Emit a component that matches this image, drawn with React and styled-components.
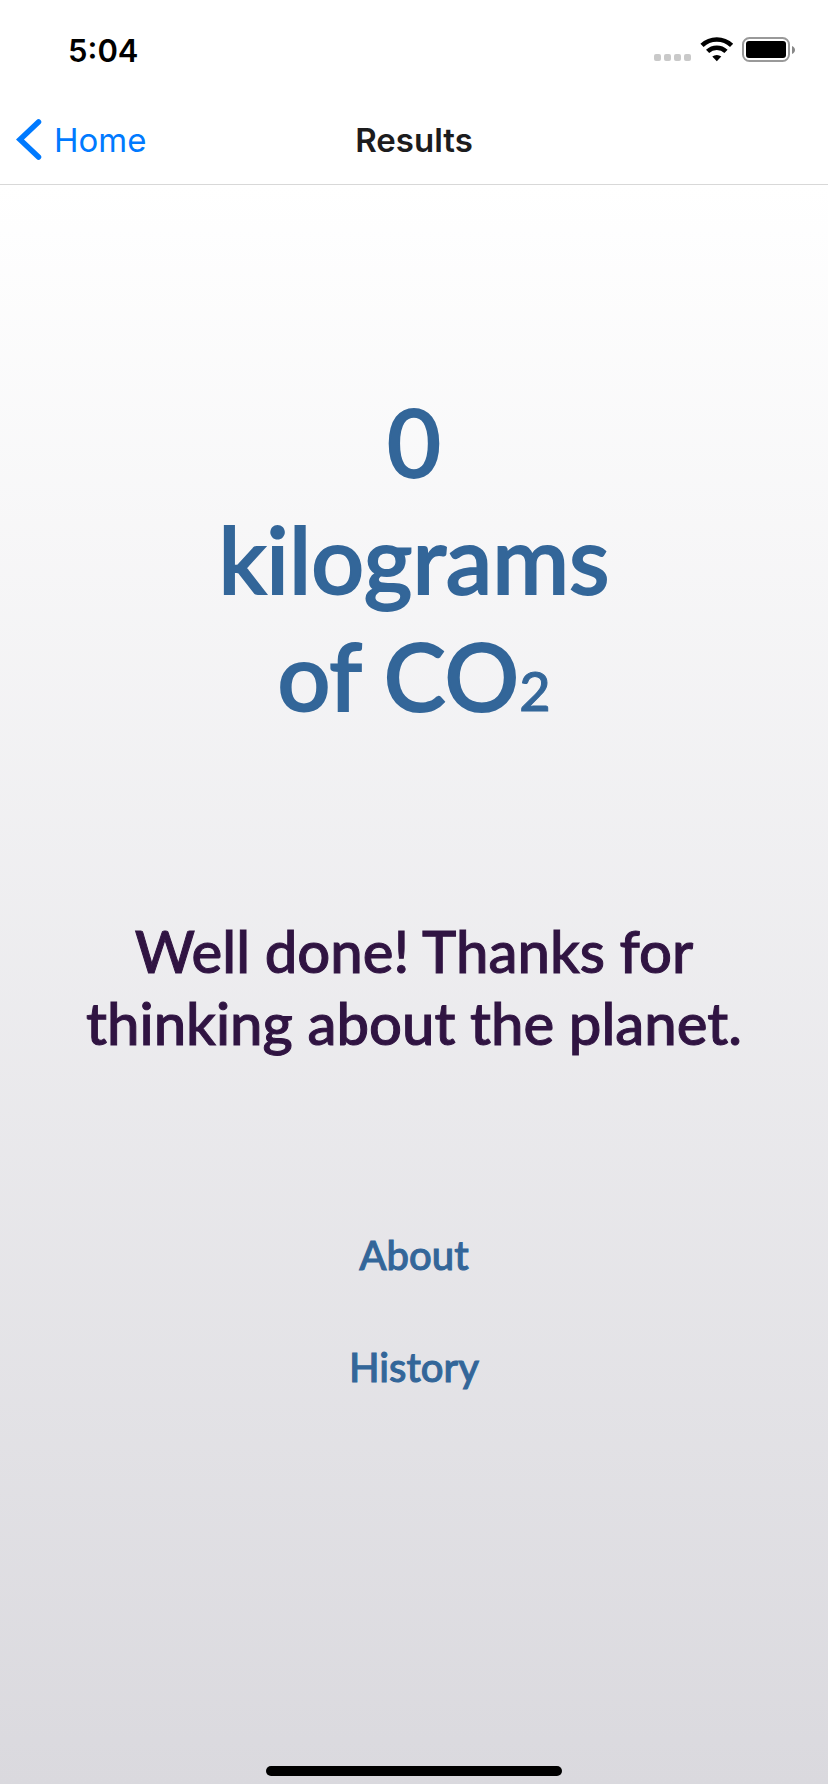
import React from "react";
import styled, { createGlobalStyle } from "styled-components";

const GlobalStyle = createGlobalStyle`
  * { box-sizing: border-box; }
  body { margin: 0; background: #fff; font-family: Inter, "Liberation Sans", sans-serif; }
`;

const Screen = styled.div`
  min-height: 100vh;
  padding-bottom: 8px;
  display: flex;
  flex-direction: column;
`;

const StatusBar = styled.header`
  height: 96px;
  padding: 6px 32px 0 68px;
  display: flex;
  align-items: center;
  justify-content: space-between;
`;

const Clock = styled.time`
  font-size: 31px;
  line-height: 40px;
  font-weight: 600;
  color: #000;
`;

const StatusIcons = styled.svg`
  width: 142px;
  height: 28px;
  display: block;
`;

const NavBar = styled.nav`
  height: 89px;
  padding: 0 16px;
  display: grid;
  grid-template-columns: 1fr auto 1fr;
  align-items: center;
  border-bottom: 1px solid #d8d8d8;
`;

const BackLink = styled.a`
  display: flex;
  align-items: center;
  gap: 12px;
  font-size: 33px;
  line-height: 44px;
  color: #007aff;
  text-decoration: none;
`;

const Title = styled.h1`
  margin: 0;
  font-size: 33px;
  line-height: 44px;
  font-weight: 600;
  color: #1c1c1e;
`;

const Body = styled.main`
  flex: 1;
  display: flex;
  flex-direction: column;
  align-items: center;
  padding-top: 198px;
  background: linear-gradient(#ffffff, #dad9de);
  font-family: Lato, "Open Sans", sans-serif;
  font-weight: 500;
  text-align: center;
  color: #336699;
`;

const Amount = styled.p`
  margin: 0 0 166px;
  font-size: 93px;
  line-height: 117px;
  -webkit-text-stroke: 2px currentColor;
`;

const Subscript = styled.span`
  font-size: 54px;
  -webkit-text-stroke-width: 1px;
`;

const Message = styled.p`
  margin: 0 0 168px;
  font-size: 58px;
  line-height: 72px;
  color: #301442;
  -webkit-text-stroke: 1px currentColor;
`;

const Links = styled.div`
  display: flex;
  flex-direction: column;
  align-items: center;
  gap: 56px;
`;

const TextLink = styled.a`
  font-size: 40px;
  line-height: 56px;
  color: inherit;
  text-decoration: none;
  -webkit-text-stroke: 1px currentColor;
`;

const HomeIndicator = styled.div`
  width: 296px;
  height: 10px;
  margin: auto 0 8px;
  border-radius: 5px;
  background: #000;
`;

export default function App() {
  return (
    <Screen>
      <GlobalStyle />
      <StatusBar>
        <Clock>5:04</Clock>
        <StatusIcons viewBox="0 0 142 28" aria-hidden="true">
          <g fill="#c9c9c9">
            <rect x="0" y="17" width="7" height="7" rx="2" />
            <rect x="10" y="17" width="7" height="7" rx="2" />
            <rect x="20" y="17" width="7" height="7" rx="2" />
            <rect x="30" y="17" width="7" height="7" rx="2" />
          </g>
          <g fill="none" stroke="#000" strokeWidth="4.6">
            <path d="M48 8.400a21.500 21.500 0 0 1 29.600 0" />
            <path d="M53.600 14.400a13.400 13.400 0 0 1 18.400 0" />
          </g>
          <path d="M62.800 24.200l-4.500-4.600a6.800 6.800 0 0 1 9 0z" fill="#000" />
          <rect x="89" y="1" width="46" height="23" rx="6.5" fill="none" stroke="#999" strokeWidth="2" />
          <rect x="92" y="4" width="40" height="17" rx="3" fill="#000" />
          <path d="M138 9c4 1.500 4 6.500 0 8z" fill="#888" />
        </StatusIcons>
      </StatusBar>
      <NavBar>
        <BackLink href="#home">
          <svg width="26" height="42" viewBox="0 0 26 42" aria-hidden="true">
            <path d="M22.500 3L4 20.500l18.500 17.500" fill="none" stroke="#007aff" strokeWidth="5.500" strokeLinecap="round" />
          </svg>
          Home
        </BackLink>
        <Title>Results</Title>
      </NavBar>
      <Body>
        <Amount>
          0<br />kilograms<br />of CO<Subscript>2</Subscript>
        </Amount>
        <Message>Well done! Thanks for<br />thinking about the planet.</Message>
        <Links>
          <TextLink href="#about">About</TextLink>
          <TextLink href="#history">History</TextLink>
        </Links>
        <HomeIndicator />
      </Body>
    </Screen>
  );
}
